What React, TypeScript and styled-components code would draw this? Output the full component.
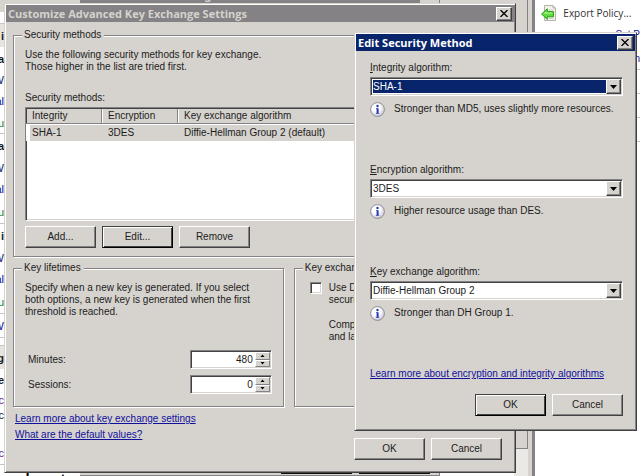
import React from "react";
import styled, { createGlobalStyle, css } from "styled-components";

const FACE = "#d6d3ce";
const SHADOW = "#848284";
const DARK = "#424142";
const LIGHT = "#ffffff";
const NAVY = "#08246b";
const LINK = "#10109c";

const GlobalStyle = createGlobalStyle`
  *, *::before, *::after { box-sizing: border-box; }
  body {
    margin: 0;
    background: #ffffff;
    color: #1c1c1c;
    font: 10px/12px "Liberation Sans", Arial, sans-serif;
  }
  button, input, select { font: inherit; color: inherit; margin: 0; border-radius: 0; }
  p { margin: 0; }
`;

const raised = css`
  border: 1px solid;
  border-color: ${LIGHT} ${DARK} ${DARK} ${LIGHT};
  box-shadow: inset -1px -1px 0 ${SHADOW};
`;

const sunken = css`
  border: 1px solid;
  border-color: ${SHADOW} ${LIGHT} ${LIGHT} ${SHADOW};
  box-shadow: inset 1px 1px 0 ${DARK}, inset -1px -1px 0 ${FACE};
`;

const Desktop = styled.div`
  position: relative;
  display: grid;
  grid-template-columns: minmax(0, 5fr) minmax(0, 1fr);
  height: 100vh;
  overflow: hidden;
  background: ${FACE};
`;

const Console = styled.div`
  display: flex;
  flex-direction: column;
  justify-content: space-between;
  overflow: hidden;
  border-right: 1px solid ${SHADOW};
`;

const Overview = styled.div`
  display: flex;
  flex-direction: column;
  flex: 1;
  width: 4px;
  margin-top: 12px;
  background: ${LIGHT};
  overflow: hidden;
`;

const OverviewRow = styled.div<{
  $height?: number;
  $tone?: string;
  $bold?: boolean;
  $rule?: boolean;
  $shaded?: boolean;
}>`
  display: flex;
  flex: none;
  justify-content: flex-end;
  align-items: center;
  height: ${(p) => p.$height ?? 22}px;
  font-size: 11px;
  color: ${(p) => p.$tone ?? "#1c1c1c"};
  font-weight: ${(p) => (p.$bold ? 700 : 400)};
  border-top: 1px solid ${(p) => (p.$rule ? "#c6c3c6" : "transparent")};
  background: ${(p) => (p.$shaded ? "#e7e3de" : "transparent")};
`;

const Snippet = styled.div`
  display: flex;
  justify-content: flex-end;
  width: 80px;
  height: 5px;
  padding-right: 6px;
  overflow: hidden;
  background: ${LIGHT};
  color: #000;
  white-space: nowrap;
  font: bold 13px/14px "Noto Sans", sans-serif;
`;

const Actions = styled.aside`
  display: flex;
  flex-direction: column;
  padding: 5px 0 0 6px;
  background: ${LIGHT};
  border-left: 2px solid ${SHADOW};
`;

const ActionLink = styled.a`
  display: flex;
  align-items: center;
  gap: 6px;
  color: #303030;
  text-decoration: none;
  white-space: nowrap;
  font: 10px/16px "Open Sans", sans-serif;
`;

const PolicyList = styled.div`
  display: flex;
  flex-direction: column;
  margin-top: 8px;
  color: ${LINK};
  overflow: hidden;
`;

const PolicyRow = styled.div<{ $height?: number; $rule?: boolean }>`
  height: ${(p) => p.$height ?? 24}px;
  text-align: right;
  white-space: nowrap;
  border-bottom: 1px solid ${(p) => (p.$rule ? "#c6c3c6" : "transparent")};
`;

const BackWindow = styled.div<{ $right: number; $top: number; $bottom: number }>`
  position: absolute;
  left: 80px;
  right: ${(p) => p.$right}px;
  top: ${(p) => p.$top}px;
  bottom: ${(p) => p.$bottom}px;
  display: flex;
  flex-direction: column;
  justify-content: space-between;
  overflow: hidden;
  background: ${FACE};
  border-right: 1px solid ${SHADOW};
  border-bottom: 1px solid ${SHADOW};
`;

const BackTitle = styled.div`
  margin-right: 19px;
  background: ${SHADOW};
  color: ${FACE};
  font: bold 11px/17px "Noto Sans", sans-serif;
`;

const BackButtons = styled.div`
  display: flex;
  justify-content: flex-end;
  gap: 7px;
  padding-right: 9px;
`;

const BackEdge = styled.span`
  width: 71px;
  height: 2px;
  border-top: 1px solid #101010;
`;

const ScrollTrack = styled.div`
  position: absolute;
  right: 112px;
  bottom: 0;
  width: 88px;
  height: 27px;
  background: linear-gradient(90deg, #ffffff 74px, #ebe9e6 74px);
`;

const Window = styled.section`
  position: absolute;
  background: ${FACE};
  border: 1px solid;
  border-color: ${FACE} ${DARK} ${DARK} ${FACE};
  box-shadow: inset 1px 1px 0 ${LIGHT}, inset -1px -1px 0 ${SHADOW};
  padding: 1px;
`;

const SettingsWindow = styled(Window)`
  top: 3px;
  left: 4px;
  right: 124px;
`;

const MethodWindow = styled(Window)`
  top: 32px;
  right: 3px;
  width: 283px;
`;

const TitleBar = styled.header<{ $active?: boolean }>`
  display: flex;
  align-items: center;
  justify-content: space-between;
  height: 17px;
  padding: 0 2px;
  background: ${(p) => (p.$active ? NAVY : SHADOW)};
  color: ${(p) => (p.$active ? LIGHT : FACE)};
`;

const TitleText = styled.h1`
  margin: 0;
  font: bold 11px/16px "Open Sans", sans-serif;
  white-space: nowrap;
`;

const CloseButton = styled.button`
  ${raised}
  display: grid;
  place-items: center;
  width: 16px;
  height: 14px;
  padding: 0;
  background: ${FACE};
  color: #000;
`;

const SettingsBody = styled.div`
  padding: 7px 12px 11px 7px;
`;

const Group = styled.fieldset`
  min-width: 0;
  margin: 0;
  padding: 8px 11px;
  border: 1px solid ${SHADOW};
  box-shadow: 1px 1px 0 ${LIGHT}, inset 1px 1px 0 ${LIGHT};
`;

const GroupTitle = styled.legend`
  margin-left: -3px;
  padding: 0 3px 0 2px;
  background: ${FACE};
`;

const ListLabel = styled.h2`
  margin: 19px 0 3px;
  font: inherit;
`;

const ListBox = styled.div`
  ${sunken}
  height: 114px;
  padding: 1px 0 1px 0;
  background: ${LIGHT};
`;

const MethodTable = styled.table`
  width: 100%;
  border-collapse: separate;
  border-spacing: 0;
  table-layout: fixed;
  text-align: left;

  col.short { width: 76px; }
  th {
    height: 15px;
    padding: 0 6px;
    background: ${FACE};
    border-right: 1px solid ${SHADOW};
    border-bottom: 1px solid ${SHADOW};
    box-shadow: inset 1px 0 0 ${LIGHT};
    font-weight: 400;
  }
  td {
    height: 17px;
    padding: 0 6px;
    background: ${FACE};
    border-top: 1px solid ${LIGHT};
  }
  th:first-child { box-shadow: inset 1px 0 0 ${DARK}; }
  td:first-child {
    border-left: 4px solid ${LIGHT};
    padding-left: 2px;
  }
`;

const ButtonRow = styled.div<{ $end?: boolean }>`
  display: flex;
  gap: 6px;
  justify-content: ${(p) => (p.$end ? "flex-end" : "flex-start")};
`;

const ListButtons = styled(ButtonRow)`
  margin-top: 5px;
`;

const PushButton = styled.button<{ $default?: boolean }>`
  ${raised}
  width: 71px;
  height: 22px;
  padding: 0;
  background: ${FACE};
  ${(p) =>
    p.$default &&
    css`
      border-color: ${DARK} #000 #000 ${DARK};
      box-shadow: inset 1px 1px 0 ${LIGHT}, inset -1px -1px 0 ${DARK};
    `}
`;

const GroupColumns = styled.div`
  display: grid;
  grid-template-columns: minmax(0, 13fr) minmax(0, 10fr);
  gap: 10px;
  margin-top: 5px;
`;

const SpinRows = styled.div`
  display: grid;
  gap: 6px;
  margin-top: 32px;
  padding-bottom: 4px;
`;

const SpinRow = styled.div`
  display: flex;
  align-items: center;
  justify-content: space-between;
  padding-left: 3px;
`;

const Spinner = styled.div`
  ${sunken}
  display: grid;
  grid-template-columns: minmax(0, 1fr) 15px;
  width: 82px;
  height: 19px;
  padding: 1px;
  background: ${LIGHT};
`;

const SpinInput = styled.input`
  width: 100%;
  padding: 0 2px;
  border: 0;
  background: transparent;
  text-align: right;
`;

const SpinButtons = styled.div`
  display: grid;
  grid-template-rows: 1fr 1fr;
`;

const SpinButton = styled.button`
  display: grid;
  place-items: center;
  padding: 0;
  background: ${FACE};
  border: 1px solid;
  border-color: ${LIGHT} ${SHADOW} ${SHADOW} ${LIGHT};
`;

const CheckLabel = styled.label`
  display: flex;
  gap: 7px;
  white-space: nowrap;
`;

const CheckBox = styled.input`
  ${sunken}
  appearance: none;
  flex: none;
  width: 12px;
  height: 12px;
  margin-left: 4px;
  background: ${LIGHT};
`;

const CheckNote = styled.p`
  margin: 13px 0 0 23px;
  white-space: nowrap;
`;

const Footer = styled.footer`
  display: flex;
  justify-content: space-between;
  align-items: flex-end;
  padding: 6px 0 0 2px;
`;

const LinkList = styled.nav`
  display: flex;
  flex-direction: column;
  align-items: flex-start;
  align-self: flex-start;
  gap: 4px;
  padding-bottom: 19px;
`;

const TextLink = styled.a`
  color: ${LINK};
  text-decoration: underline;
`;

const MethodBody = styled.form`
  display: flex;
  flex-direction: column;
  padding: 11px 12px 13px 14px;
`;

const Fields = styled.div`
  display: grid;
  gap: 47px;
  margin-bottom: 47px;
`;

const Field = styled.div`
  display: flex;
  flex-direction: column;
`;

const AccessKey = styled.span`
  text-decoration: underline;
`;

const Combo = styled.div`
  ${sunken}
  display: grid;
  grid-template-columns: minmax(0, 1fr) 15px;
  height: 19px;
  margin: 3px 0 6px;
  padding: 1px;
  background: ${LIGHT};
`;

const ComboSelect = styled.select<{ $focused?: boolean }>`
  appearance: none;
  grid-area: 1 / 1 / 2 / 3;
  width: 100%;
  padding: 0 16px 0 0;
  border: 1px solid ${LIGHT};
  outline: 0;
  line-height: 12px;
  background: ${(p) => (p.$focused ? NAVY : LIGHT)};
  color: ${(p) => (p.$focused ? LIGHT : "#1c1c1c")};
`;

const ComboArrow = styled.span`
  ${raised}
  grid-area: 1 / 2 / 2 / 3;
  display: grid;
  place-items: center;
  background: ${FACE};
  pointer-events: none;
`;

const Hint = styled.p`
  display: flex;
  gap: 9px;
  height: 15px;
  line-height: 14px;
`;

const DialogButtons = styled(ButtonRow)`
  margin-top: 14px;
`;

const CloseGlyph = () => (
  <svg width="8" height="7" viewBox="0 0 8 7" aria-hidden="true">
    <path d="M0.5 0 L7.5 7 M7.5 0 L0.5 7" stroke="#000" strokeWidth="1.3" fill="none" />
  </svg>
);

const DownGlyph = () => (
  <svg width="7" height="4" viewBox="0 0 7 4" aria-hidden="true">
    <path d="M0 0H7L3.5 4Z" fill="#000" />
  </svg>
);

const SpinGlyph = ({ up }: { up?: boolean }) => (
  <svg width="5" height="3" viewBox="0 0 5 3" aria-hidden="true">
    <path d={up ? "M0.5 3H4.5L2.5 0.5Z" : "M0.5 0H4.5L2.5 2.5Z"} fill="#000" />
  </svg>
);

const InfoGlyph = () => (
  <svg width="15" height="15" viewBox="0 0 15 15" aria-hidden="true">
    <defs>
      <radialGradient id="infoFill" cx="0.4" cy="0.35" r="0.7">
        <stop offset="0.4" stopColor="#ffffff" />
        <stop offset="1" stopColor="#c4c4d2" />
      </radialGradient>
    </defs>
    <circle cx="7.5" cy="7.5" r="6.9" fill="url(#infoFill)" stroke="#8e8c96" strokeWidth="1" />
    <circle cx="7.5" cy="4" r="1.2" fill="#2434b4" />
    <path d="M6 6.2H8.6V11H9.2V11.8H5.9V11H6.6V7H6Z" fill="#2434b4" />
  </svg>
);

const ExportGlyph = () => (
  <svg width="16" height="16" viewBox="0 0 16 16" aria-hidden="true">
    <path d="M3.5 0.5H12L14.5 3V15.5H3.5Z" fill="#f3f2ea" stroke="#b5b3a8" />
    <path d="M12 0.5V3H14.5" fill="#dcdace" stroke="#b5b3a8" />
    <path d="M8 5H12.5M8 13.5H12.5" stroke="#cfcdc2" />
    <path d="M0.6 9L6.3 3.8V6.6H12.4V11.8H6.3V14.4Z" fill="#5fdc3c" stroke="#259a1c" strokeLinejoin="round" />
    <path d="M2.4 8.8L5.5 6V7.6H11.4V8.8Z" fill="#a5f283" />
  </svg>
);

interface OverviewItem {
  text?: string;
  height?: number;
  tone?: string;
  bold?: boolean;
  rule?: boolean;
  shaded?: boolean;
}

const overviewRows: OverviewItem[] = [
  { height: 11 },
  { text: "i", height: 24, bold: true, rule: true, shaded: true },
  { text: "a", bold: true },
  { text: "W", tone: "#10206b", height: 20 },
  { text: "al", tone: LINK },
  { text: "u", tone: "#2a7a2a" },
  { text: "a", height: 24, bold: true, rule: true },
  { text: "W", tone: "#10206b", height: 20 },
  { text: "al", tone: LINK },
  { text: "u", tone: "#2a7a2a", height: 24 },
  { text: "i", height: 24, bold: true, rule: true },
  { text: "W", tone: "#10206b", height: 20 },
  { text: "al", tone: LINK },
  { text: "u", tone: "#2a7a2a", height: 24 },
  { text: "W", height: 24, tone: LINK, rule: true },
  { height: 8, rule: true },
  { text: "g", height: 24, bold: true, rule: true, shaded: true },
  { text: "e", height: 20, bold: true },
  { text: "c", height: 20, tone: "#6b2088" },
  { text: "c", height: 11 },
  { height: 20 },
  { text: "c", height: 24, tone: "#6b2088" },
  { height: 11, rule: true },
];

const spinners = [
  { id: "minutes", label: "Minutes:", value: "480" },
  { id: "sessions", label: "Sessions:", value: "0" },
];

const fields = [
  { id: "integrity", access: "I", label: "ntegrity algorithm:", value: "SHA-1", hint: "Stronger than MD5, uses slightly more resources.", focused: true },
  { id: "encryption", access: "E", label: "ncryption algorithm:", value: "3DES", hint: "Higher resource usage than DES.", focused: false },
  { id: "exchange", access: "K", label: "ey exchange algorithm:", value: "Diffie-Hellman Group 2", hint: "Stronger than DH Group 1.", focused: false },
];

export default function App() {
  return (
    <>
      <GlobalStyle />
      <Desktop>
        <Console>
          <Overview>
            {overviewRows.map((row, i) => (
              <OverviewRow
                key={i}
                $height={row.height}
                $tone={row.tone}
                $bold={row.bold}
                $rule={row.rule}
                $shaded={row.shaded}
              >
                {row.text}
              </OverviewRow>
            ))}
          </Overview>
          <Snippet>and create</Snippet>
        </Console>
        <Actions>
          <ActionLink href="#export">
            <ExportGlyph />
            Export Policy...
          </ActionLink>
          <PolicyList>
            <PolicyRow>Set P</PolicyRow>
            <PolicyRow $height={17} $rule>
              in
            </PolicyRow>
            <PolicyRow $rule />
            <PolicyRow $rule />
            <PolicyRow $rule />
          </PolicyList>
        </Actions>

        <BackWindow $right={112} $top={-20} $bottom={27} />
        <ScrollTrack />
        <BackWindow $right={200} $top={-14} $bottom={0}>
          <BackTitle>Customize IPsec Settings</BackTitle>
          <BackButtons>
            <BackEdge />
            <BackEdge />
          </BackButtons>
        </BackWindow>

        <SettingsWindow aria-label="Customize Advanced Key Exchange Settings">
          <TitleBar>
            <TitleText>Customize Advanced Key Exchange Settings</TitleText>
            <CloseButton type="button" aria-label="Close">
              <CloseGlyph />
            </CloseButton>
          </TitleBar>
          <SettingsBody>
            <Group>
              <GroupTitle>Security methods</GroupTitle>
              <p>
                Use the following security methods for key exchange.
                <br />
                Those higher in the list are tried first.
              </p>
              <ListLabel id="methods">Security methods:</ListLabel>
              <ListBox>
                <MethodTable aria-labelledby="methods">
                  <colgroup>
                    <col className="short" />
                    <col className="short" />
                    <col />
                  </colgroup>
                  <thead>
                    <tr>
                      <th scope="col">Integrity</th>
                      <th scope="col">Encryption</th>
                      <th scope="col">Key exchange algorithm</th>
                    </tr>
                  </thead>
                  <tbody>
                    <tr>
                      <td>SHA-1</td>
                      <td>3DES</td>
                      <td>Diffie-Hellman Group 2 (default)</td>
                    </tr>
                  </tbody>
                </MethodTable>
              </ListBox>
              <ListButtons>
                <PushButton type="button">Add...</PushButton>
                <PushButton type="button" $default>
                  Edit...
                </PushButton>
                <PushButton type="button">Remove</PushButton>
              </ListButtons>
            </Group>

            <GroupColumns>
              <Group>
                <GroupTitle>Key lifetimes</GroupTitle>
                <p>
                  Specify when a new key is generated. If you select
                  <br />
                  both options, a new key is generated when the first
                  <br />
                  threshold is reached.
                </p>
                <SpinRows>
                  {spinners.map((s) => (
                    <SpinRow key={s.id}>
                      <label htmlFor={s.id}>{s.label}</label>
                      <Spinner>
                        <SpinInput id={s.id} type="text" defaultValue={s.value} />
                        <SpinButtons>
                          <SpinButton type="button" aria-label="Increase">
                            <SpinGlyph up />
                          </SpinButton>
                          <SpinButton type="button" aria-label="Decrease">
                            <SpinGlyph />
                          </SpinButton>
                        </SpinButtons>
                      </Spinner>
                    </SpinRow>
                  ))}
                </SpinRows>
              </Group>
              <Group>
                <GroupTitle>Key exchange options</GroupTitle>
                <CheckLabel>
                  <CheckBox type="checkbox" />
                  <span>
                    Use Diffie-Hellman for enhanced
                    <br />
                    security.
                  </span>
                </CheckLabel>
                <CheckNote>
                  Compatible only with Windows Vista
                  <br />
                  and later.
                </CheckNote>
              </Group>
            </GroupColumns>

            <Footer>
              <LinkList>
                <TextLink href="#settings">Learn more about key exchange settings</TextLink>
                <TextLink href="#defaults">What are the default values?</TextLink>
              </LinkList>
              <ButtonRow $end>
                <PushButton type="button">OK</PushButton>
                <PushButton type="button">Cancel</PushButton>
              </ButtonRow>
            </Footer>
          </SettingsBody>
        </SettingsWindow>

        <MethodWindow role="dialog" aria-label="Edit Security Method">
          <TitleBar $active>
            <TitleText>Edit Security Method</TitleText>
            <CloseButton type="button" aria-label="Close">
              <CloseGlyph />
            </CloseButton>
          </TitleBar>
          <MethodBody>
            <Fields>
              {fields.map((f) => (
                <Field key={f.id}>
                  <label htmlFor={f.id}>
                    <AccessKey>{f.access}</AccessKey>
                    {f.label}
                  </label>
                  <Combo>
                    <ComboSelect id={f.id} defaultValue={f.value} $focused={f.focused}>
                      <option>{f.value}</option>
                    </ComboSelect>
                    <ComboArrow>
                      <DownGlyph />
                    </ComboArrow>
                  </Combo>
                  <Hint>
                    <InfoGlyph />
                    {f.hint}
                  </Hint>
                </Field>
              ))}
            </Fields>
            <TextLink href="#algorithms">Learn more about encryption and integrity algorithms</TextLink>
            <DialogButtons $end>
              <PushButton type="button" $default>
                OK
              </PushButton>
              <PushButton type="button">Cancel</PushButton>
            </DialogButtons>
          </MethodBody>
        </MethodWindow>
      </Desktop>
    </>
  );
}
